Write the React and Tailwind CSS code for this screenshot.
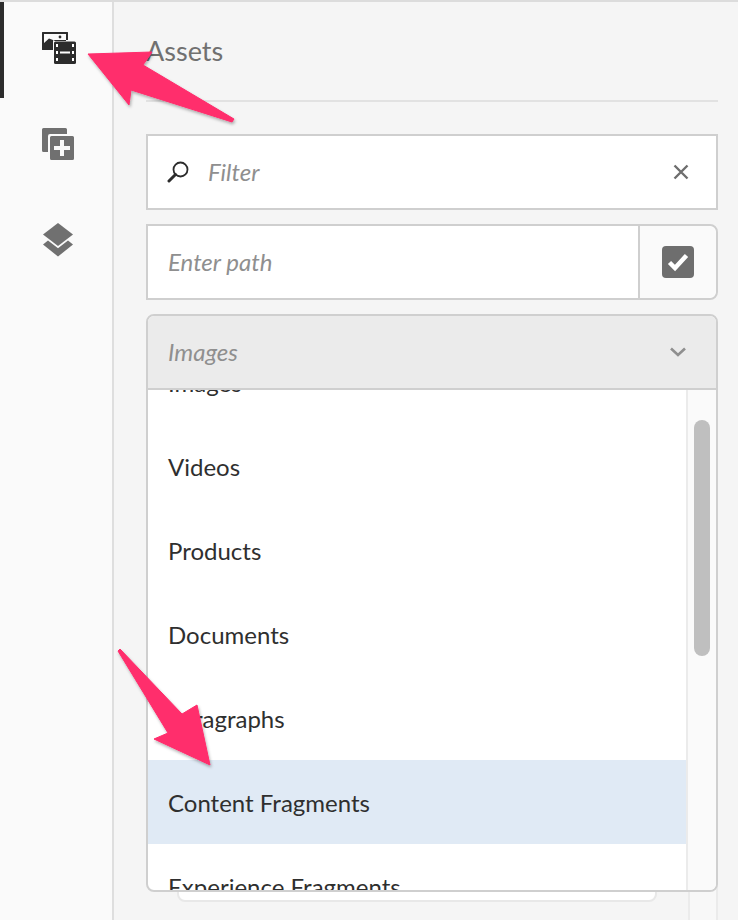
import React from 'react';

const font = { fontFamily: 'Lato, "Open Sans", sans-serif' };

const items = ['Images', 'Videos', 'Products', 'Documents', 'Paragraphs', 'Content Fragments', 'Experience Fragments'];

const AssetsIcon = () => (
  <svg width="36" height="34" viewBox="0 0 36 34" className="block">
    <path fill="#2c2c2c" fillRule="evenodd" d="M1 1.500a.5.5 0 0 1 .5-.5h25a.5.5 0 0 1 .5.5V9H12v10H1.500a.5.5 0 0 1-.5-.5ZM3 3v9l5-4.500 4 1.500 2 1h11V3Z" />
    <circle cx="19" cy="6" r="1.400" fill="#2c2c2c" />
    <path fill="#2c2c2c" d="M14.500 10.500h19a1.500 1.500 0 0 1 1.500 1.500v19.500a1.500 1.500 0 0 1-1.500 1.500h-19a1.500 1.500 0 0 1-1.500-1.500V12a1.500 1.500 0 0 1 1.500-1.500Z" />
    <path fill="#fff" d="M15 13h2v3h-2ZM15 20h2v3h-2ZM15 27h2v3h-2ZM31 13h2v3h-2ZM31 20h2v3h-2ZM31 27h2v3h-2ZM19 20.500h10v2H19Z" />
  </svg>
);

const AddIcon = () => (
  <svg width="32" height="32" viewBox="0 0 32 32" className="block">
    <path fill="#707070" d="M1.500 0h22A1.500 1.500 0 0 1 25 1.500V6H8a2 2 0 0 0-2 2v16H1.500A1.500 1.500 0 0 1 0 22.500v-21A1.500 1.500 0 0 1 1.500 0Z" />
    <path fill="#707070" fillRule="evenodd" d="M9.500 8h21A1.500 1.500 0 0 1 32 9.500v21a1.500 1.500 0 0 1-1.500 1.500h-21A1.500 1.500 0 0 1 8 30.500v-21A1.500 1.500 0 0 1 9.500 8ZM18 12v6h-6v4h6v6h4v-6h6v-4h-6v-6Z" />
  </svg>
);

const LayersIcon = () => (
  <svg width="32" height="34" viewBox="0 0 32 34" className="block">
    <path fill="#707070" d="M16 0 31 11.500 16 23 1 11.500Z" />
    <path fill="#707070" d="M6 17.500 16 25.200 26 17.500 31 21.500 16 33.500 1 21.500Z" />
  </svg>
);

const SearchIcon = () => (
  <svg width="22" height="22" viewBox="0 0 22 22" className="block">
    <circle cx="13.500" cy="8.500" r="7" fill="none" stroke="#2c2c2c" strokeWidth="1.800" />
    <path d="M8.500 13.500 2 20" stroke="#2c2c2c" strokeWidth="3" strokeLinecap="round" />
  </svg>
);

const CloseIcon = () => (
  <svg width="16" height="16" viewBox="0 0 16 16" className="block">
    <path d="M1.500 1.500l13 13M14.500 1.500l-13 13" stroke="#6e6e6e" strokeWidth="2.400" />
  </svg>
);

const CheckIcon = () => (
  <svg width="32" height="32" viewBox="0 0 32 32" className="block">
    <rect width="32" height="32" rx="4" fill="#6e6e6e" />
    <path d="M7.500 16.500 13 22 24.500 9.500" fill="none" stroke="#fff" strokeWidth="4.500" />
  </svg>
);

const ChevronIcon = () => (
  <svg width="16" height="10" viewBox="0 0 16 10" className="block">
    <path d="M1 1.500 8 8l7-6.500" fill="none" stroke="#8f8f8f" strokeWidth="2.600" />
  </svg>
);

// annotation arrows sit over the page, same canvas as the screenshot
const Arrows = () => (
  <svg width="738" height="920" viewBox="0 0 738 920" className="absolute left-0 top-0 pointer-events-none">
    <defs>
      <filter id="arrowShadow" x="-20%" y="-20%" width="140%" height="140%">
        <feDropShadow dx="1" dy="2" stdDeviation="1.500" floodColor="#000" floodOpacity="0.3" />
      </filter>
    </defs>
    <g fill="#ff2d6c" stroke="#ff2d6c" strokeLinejoin="round" filter="url(#arrowShadow)">
      <path strokeWidth="1" d="M88 52 152 50 143 63 234 117 232 120 131 88 129 103Z" />
      <path strokeWidth="1" d="M118 649 120 647 182 712 197 703 210 763 154 737 168 731Z" />
    </g>
  </svg>
);

export default function App() {
  return (
    <div className="relative flex h-[920px] w-[738px] overflow-hidden border-t-2 border-[#dcdcdc] bg-[#f5f5f5]" style={font}>
      {/* left rail */}
      <div className="flex h-full w-[114px] shrink-0 flex-col border-r-2 border-[#dedede] bg-[#fafafa]">
        <div className="flex h-[96px] items-start border-l-4 border-[#2c2c2c] pl-[37px] pt-[29px]">
          <AssetsIcon />
        </div>
        <div className="pl-[42px] pt-[30px]"><AddIcon /></div>
        <div className="pl-[42px] pt-[63px]"><LayersIcon /></div>
      </div>

      <div className="relative flex-1 pl-[32px] pr-[20px]">
        <div className="flex h-[100px] items-start border-b-2 border-[#e2e2e2] pt-[32px] text-[27px] leading-[34px] text-[#707070]">
          Assets
        </div>

        <div className="mt-[32px] flex h-[76px] items-center border-2 border-[#cfcfcf] bg-white pl-[19px] pr-[27px]">
          <SearchIcon />
          <span className="ml-[19px] flex-1 text-[24px] italic text-[#8f8f8f]">Filter</span>
          <CloseIcon />
        </div>

        <div className="mt-[14px] flex h-[76px] rounded-r-lg border-2 border-[#cfcfcf] bg-white">
          <div className="flex flex-1 items-center border-r-2 border-[#cfcfcf] pl-[20px] text-[24px] italic text-[#8f8f8f]">
            Enter path
          </div>
          <div className="flex w-[76px] items-center justify-center rounded-r-lg bg-[#fafafa]"><CheckIcon /></div>
        </div>

        <div className="relative mt-[14px]">
          {/* white panel and scrollbar track peeking out under the list */}
          <div className="absolute left-[31px] top-[500px] h-[88px] w-[480px] rounded-b-lg border-2 border-[#e8e8e8] bg-white" />
          <div className="absolute left-[542px] top-[500px] h-[120px] w-[30px] border-x-2 border-[#ebebeb] bg-[#f8f8f8]" />

          <div className="relative flex h-[578px] flex-col overflow-hidden rounded-lg border-2 border-[#cfcfcf] bg-white">
            <div className="z-10 flex h-[74px] shrink-0 items-center justify-between border-b-2 border-[#cfcfcf] bg-[#ebebeb] pl-[20px] pr-[30px] text-[24px] italic text-[#8f8f8f]">
              Images
              <ChevronIcon />
            </div>
            <div className="flex min-h-0 flex-1">
              <div className="min-w-0 flex-1 overflow-hidden">
                <div className="mt-[-50px]">
                  {items.map((item) => (
                    <div
                      key={item}
                      className={`flex h-[84px] items-center pl-[20px] pt-px text-[24px] text-[#2f2f2f] ${item === 'Content Fragments' ? 'bg-[#e0eaf5]' : ''}`}
                    >
                      {item}
                    </div>
                  ))}
                </div>
              </div>
              <div className="w-[30px] shrink-0 border-l-2 border-[#ebebeb] bg-[#fafafa] pl-[6px] pt-[30px]">
                <div className="h-[236px] w-[16px] rounded-full bg-[#bfbfbf]" />
              </div>
            </div>
          </div>
        </div>
      </div>

      <Arrows />
    </div>
  );
}
